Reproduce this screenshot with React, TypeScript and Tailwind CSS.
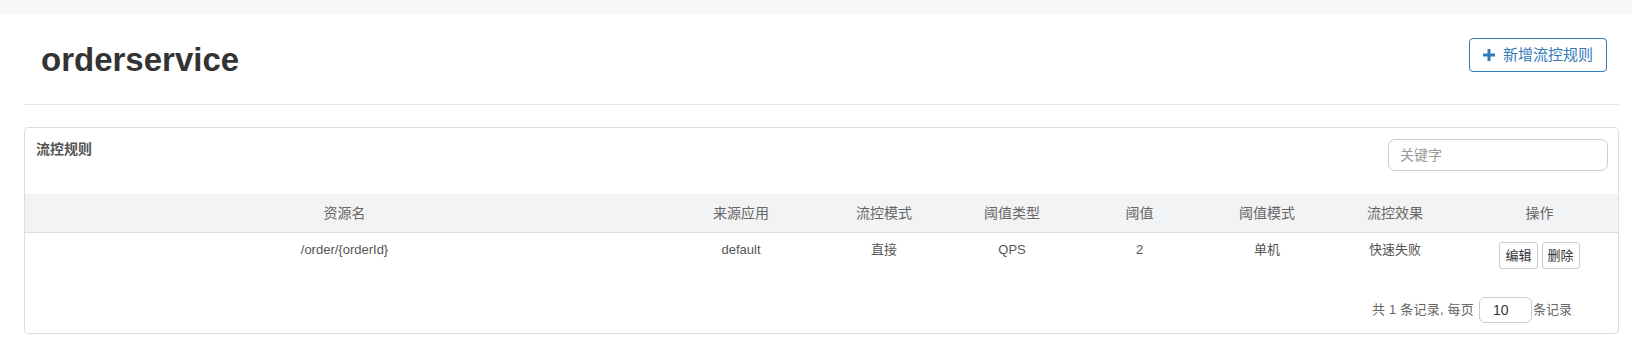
import React from "react";

const FONT = "font-['Liberation_Sans','Noto_Sans_CJK_SC',sans-serif]";

type Rule = {
  resource: string;
  limitApp: string;
  strategy: string;
  grade: string;
  count: number;
  clusterMode: string;
  behavior: string;
};

const COLUMNS = ["资源名", "来源应用", "流控模式", "阈值类型", "阈值", "阈值模式", "流控效果", "操作"];

const RULES: Rule[] = [
  {
    resource: "/order/{orderId}",
    limitApp: "default",
    strategy: "直接",
    grade: "QPS",
    count: 2,
    clusterMode: "单机",
    behavior: "快速失败",
  },
];

const GRID = "grid grid-cols-[639px_154px_132px_124px_131px_124px_132px_1fr]";

function PlusIcon() {
  return (
    <svg width="12" height="12" viewBox="0 0 12 12" className="shrink-0" aria-hidden>
      <rect x="4.5" y="0" width="3" height="12" fill="#337ab7" />
      <rect x="0" y="4.5" width="12" height="3" fill="#337ab7" />
    </svg>
  );
}

function ActionButton({ label }: { label: string }) {
  return (
    <button
      type="button"
      className="h-[27px] rounded-[3px] border border-[#cccccc] bg-white px-[5px] text-[13px] leading-[25px] text-[#333]"
    >
      {label}
    </button>
  );
}

export default function App() {
  return (
    <div className={`${FONT} min-h-[348px] bg-white`}>
      <div className="h-[14px] bg-[#f7f7f7]" />

      <div className="pl-[24px] pr-[13px]">
        {/* page header */}
        <div className="flex h-[91px] items-start justify-between border-b border-[#e5e5e5]">
          <h1 className="ml-[17px] mt-[26px] text-[33px] font-bold leading-[40px] text-[#333]">
            orderservice
          </h1>
          <button
            type="button"
            className="mr-[12px] mt-[24px] flex h-[34px] items-center gap-[8px] rounded-[4px] border border-[#337ab7] bg-white px-[13px] text-[15px] text-[#337ab7]"
          >
            <PlusIcon />
            <span>新增流控规则</span>
          </button>
        </div>

        {/* rules panel */}
        <div className="mt-[22px] rounded-[4px] border border-[#dddddd]">
          <div className="flex h-[66px] items-start justify-between pl-[11px] pr-[10px] pt-[11px]">
            <span className="text-[14px] font-bold leading-[20px] text-[#555]">流控规则</span>
            <input
              type="text"
              placeholder="关键字"
              className="h-[32px] w-[220px] rounded-[7px] border border-[#cccccc] px-[11px] text-[14px] text-[#555] outline-none placeholder:text-[#999]"
            />
          </div>

          <div className={`${GRID} h-[39px] items-center border-b border-[#dddddd] bg-[#f2f3f5]`}>
            {COLUMNS.map((c) => (
              <div key={c} className="text-center text-[14px] text-[#666]">
                {c}
              </div>
            ))}
          </div>

          {RULES.map((r) => (
            <div key={r.resource} className={`${GRID} h-[45px] items-start text-[13px] leading-[20px] text-[#555]`}>
              <div className="pt-[7px] text-center">{r.resource}</div>
              <div className="pt-[7px] text-center">{r.limitApp}</div>
              <div className="pt-[7px] text-center">{r.strategy}</div>
              <div className="pt-[7px] text-center">{r.grade}</div>
              <div className="pt-[7px] text-center">{r.count}</div>
              <div className="pt-[7px] text-center">{r.clusterMode}</div>
              <div className="pt-[7px] text-center">{r.behavior}</div>
              <div className="flex justify-center gap-[4px] pt-[9px]">
                <ActionButton label="编辑" />
                <ActionButton label="删除" />
              </div>
            </div>
          ))}

          <div className="flex items-center justify-end pb-[10px] pr-[46px] pt-[19px] text-[13px] text-[#666]">
            <span className="tracking-[0.2px]">共 1 条记录, 每页</span>
            <input
              type="text"
              defaultValue="10"
              className="ml-[5px] h-[26px] w-[53px] rounded-[6px] border border-[#cccccc] pl-[13px] text-[14px] text-[#333] outline-none"
            />
            <span className="ml-[1px]">条记录</span>
          </div>
        </div>
      </div>
    </div>
  );
}
